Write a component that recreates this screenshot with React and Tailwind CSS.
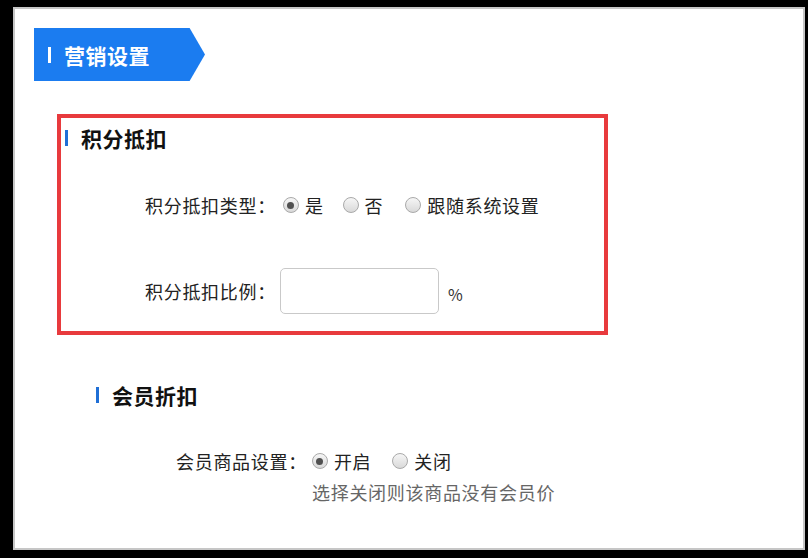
import React from 'react';

const Radio = ({ checked }) => (
  <span className="flex h-4 w-4 shrink-0 items-center justify-center rounded-full border border-[#a9a9a9] bg-linear-to-b from-[#f6f6f6] to-[#d9d9d9]">
    {checked && <span className="h-[7px] w-[7px] rounded-full bg-[#505050]" />}
  </span>
);

const Option = ({ checked, label, className = '' }) => (
  <label className={`flex items-center ${className}`}>
    <Radio checked={checked} />
    <span className="ml-[6px] text-[18px] leading-[24px] tracking-[0.7px] text-[#222]">{label}</span>
  </label>
);

const SectionTitle = ({ children, className = '' }) => (
  <div className={`flex h-[20px] items-center ${className}`}>
    <span className="h-[16px] w-[3px] bg-[#1f6fd6]" />
    <span className="ml-[13px] text-[21px] font-bold leading-[20px] tracking-[0.5px] text-[#111]">{children}</span>
  </div>
);

const App = () => {
  return (
    <div className="h-[558px] w-[808px] bg-black pl-[13px] pt-[7px] font-['Noto_Sans_CJK_SC','Noto_Sans',sans-serif]">
      <div className="h-[543px] w-[792px] border-2 border-[#c6c6c6] bg-white">
        {/* tag header */}
        <div className="ml-[19px] mt-[19px] flex h-[53px] w-[171px] items-center bg-[#1b7cf0] pl-[14px] [clip-path:polygon(0_0,91%_0,100%_50%,91%_100%,0_100%)]">
          <span className="h-[16px] w-[3px] bg-white" />
          <span className="ml-[13px] text-[21px] font-bold leading-[20px] tracking-[0.5px] text-white">营销设置</span>
        </div>

        {/* 积分抵扣 */}
        <div className="ml-[42px] mt-[33px] h-[221px] w-[551px] border-4 border-[#e83a3d]">
          <SectionTitle className="ml-[4px] mt-[10px]">积分抵扣</SectionTitle>

          <div className="ml-[84px] mt-[45px] flex h-[24px] items-center">
            <span className="text-[18px] leading-[24px] tracking-[0.7px] text-[#222]">积分抵扣类型：</span>
            <Option checked label="是" className="ml-[7px]" />
            <Option label="否" className="ml-[19px]" />
            <Option label="跟随系统设置" className="ml-[22px]" />
          </div>

          <div className="ml-[84px] mt-[51px] flex h-[46px] items-center">
            <span className="text-[18px] leading-[24px] tracking-[0.7px] text-[#222]">积分抵扣比例：</span>
            <input
              type="text"
              className="ml-[4px] h-[46px] w-[159px] rounded-[5px] border border-[#c9c9c9] bg-white px-2 text-[16px] outline-none"
            />
            <span className="ml-[9px] mt-[6px] text-[16px] leading-[20px] text-[#333]">%</span>
          </div>
        </div>

        {/* 会员折扣 */}
        <SectionTitle className="ml-[81px] mt-[50px]">会员折扣</SectionTitle>

        <div className="ml-[161px] mt-[44px] flex h-[24px] items-center">
          <span className="text-[18px] leading-[24px] tracking-[0.7px] text-[#222]">会员商品设置：</span>
          <Option checked label="开启" className="ml-[5px]" />
          <Option label="关闭" className="ml-[21px]" />
        </div>
        <div className="ml-[297px] mt-[8px] text-[18px] leading-[22px] tracking-[0.7px] text-[#666]">
          选择关闭则该商品没有会员价
        </div>
      </div>
    </div>
  );
};

export default App;
